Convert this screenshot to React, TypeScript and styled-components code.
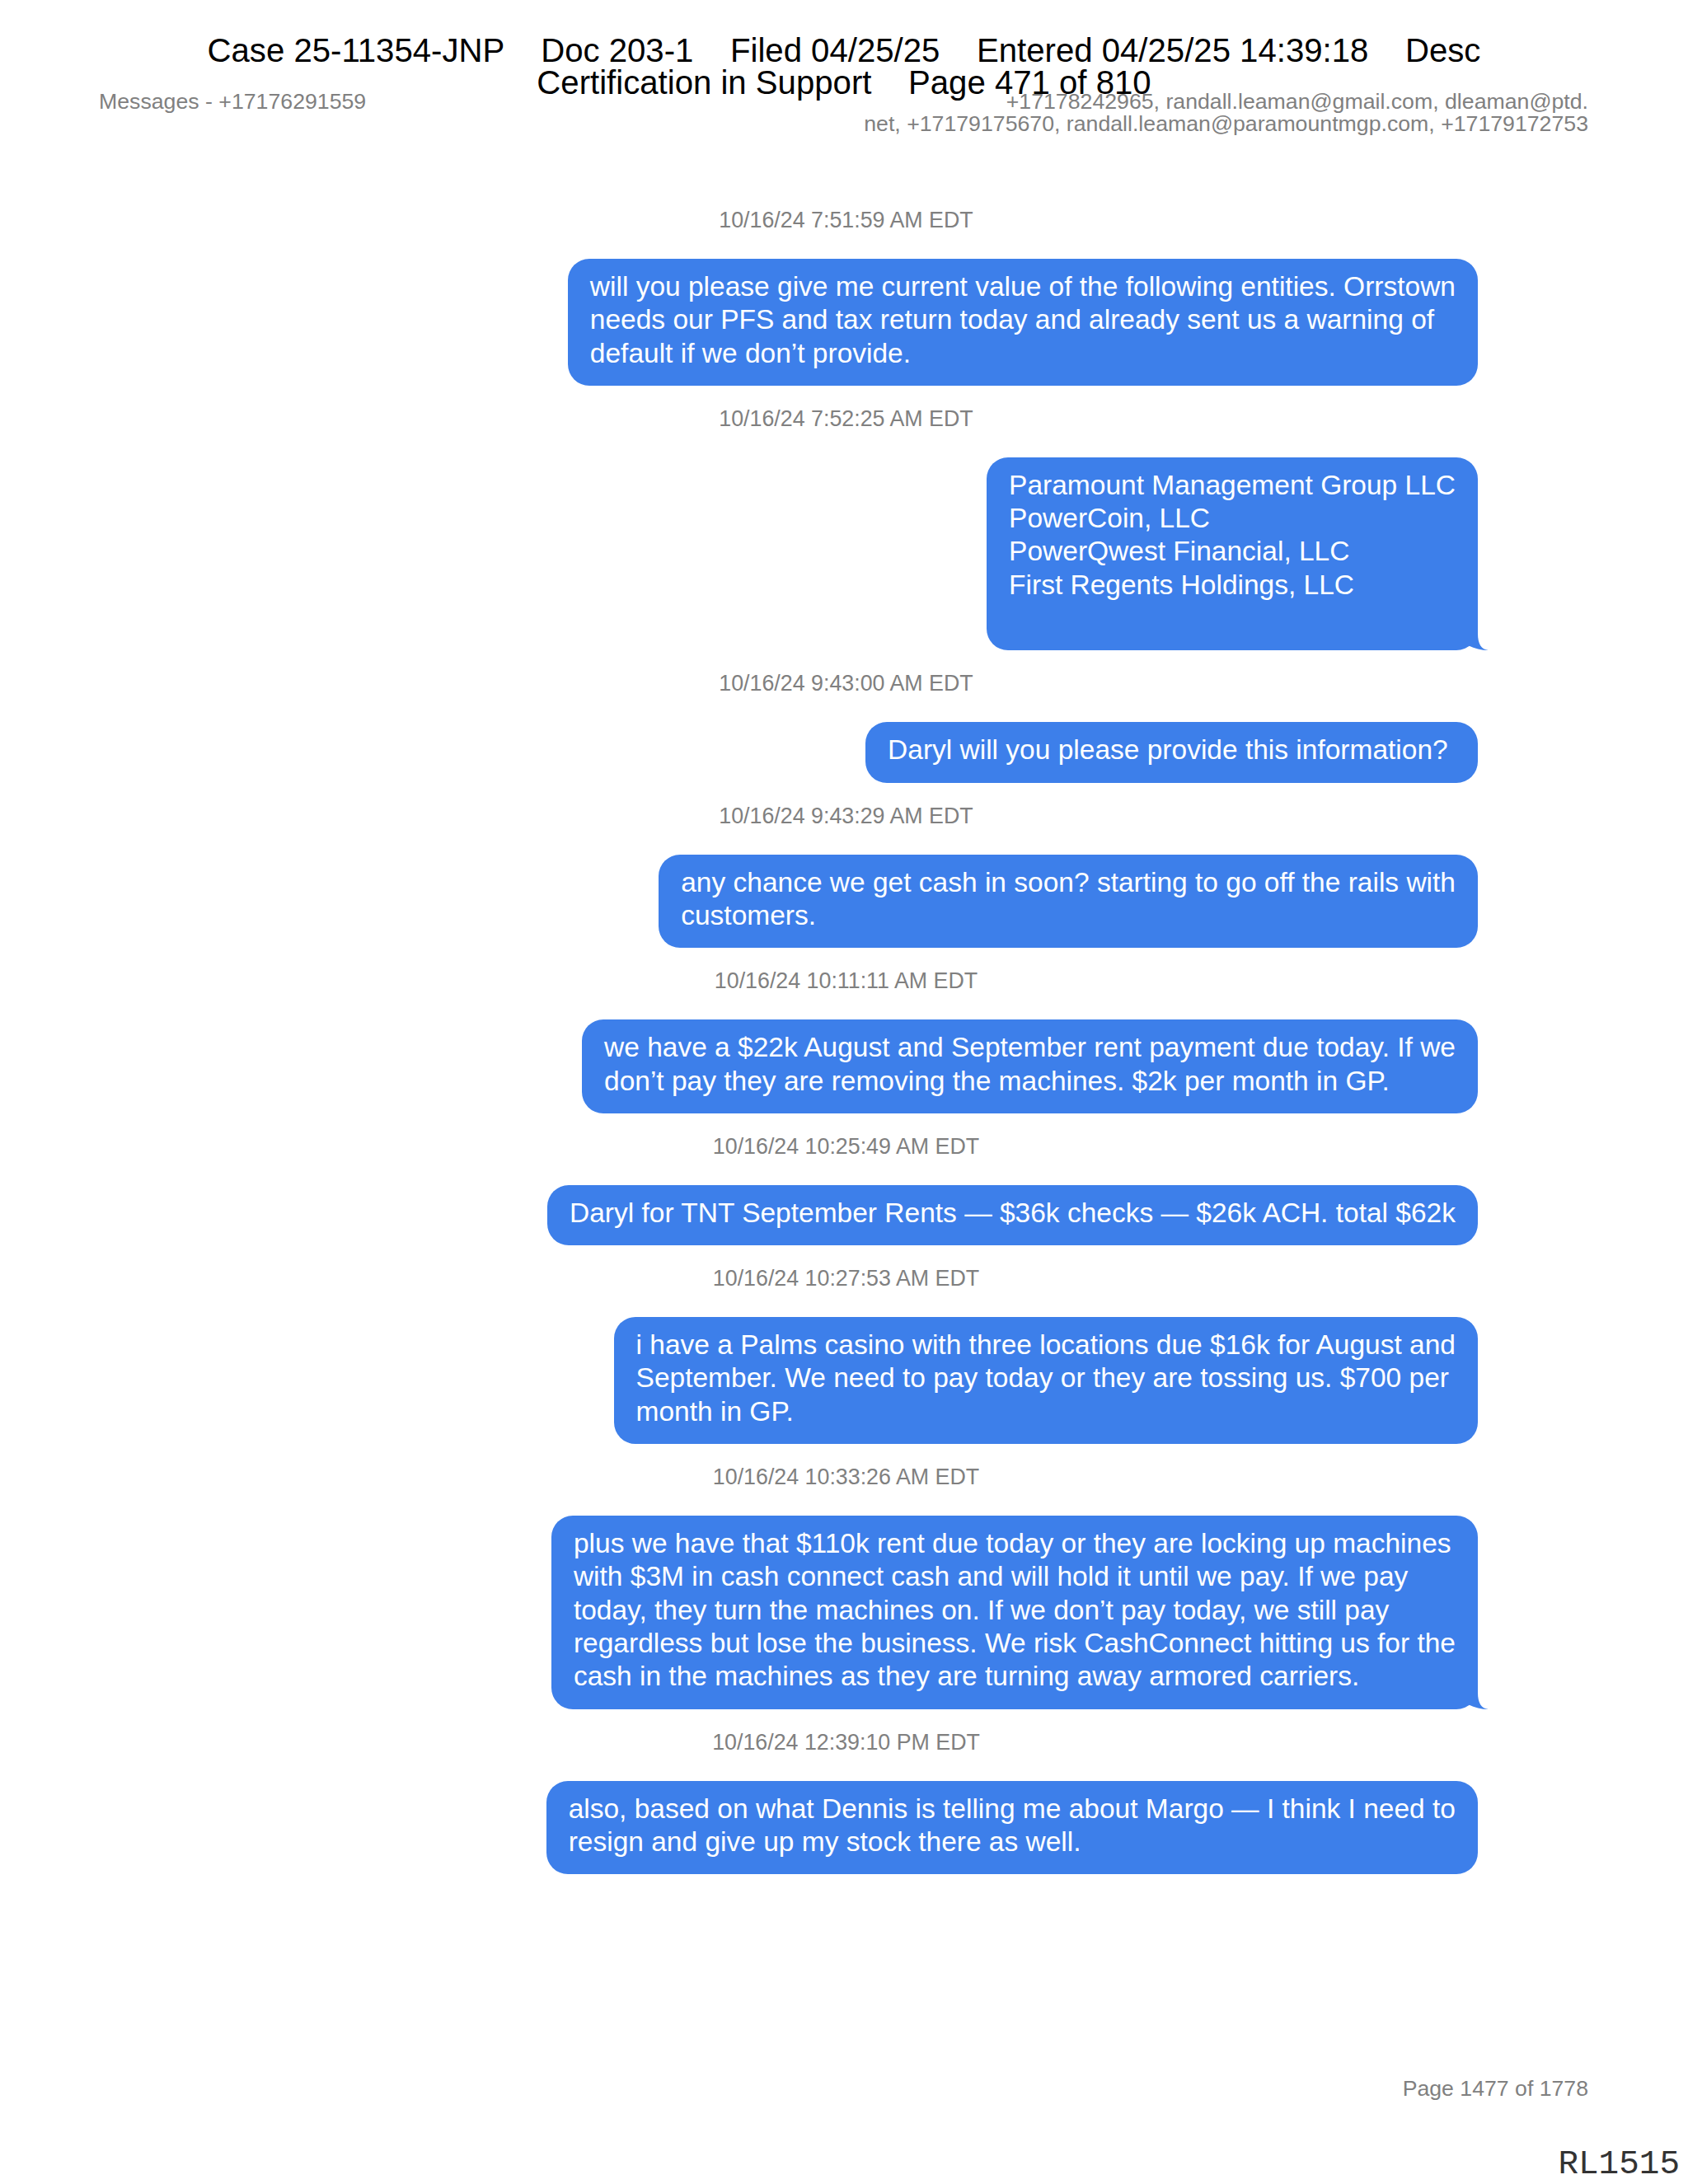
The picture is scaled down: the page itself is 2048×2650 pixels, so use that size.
import styled, { createGlobalStyle } from 'styled-components';

type Message = {
  time: string;
  text: string;
  tail?: boolean;
};

const messages: Message[] = [
  {
    time: '10/16/24 7:51:59 AM EDT',
    text: 'will you please give me current value of the following entities. Orrstown\nneeds our PFS and tax return today and already sent us a warning of\ndefault if we don’t provide.',
  },
  {
    time: '10/16/24 7:52:25 AM EDT',
    text: 'Paramount Management Group LLC\nPowerCoin, LLC\nPowerQwest Financial, LLC\nFirst Regents Holdings, LLC\n ',
    tail: true,
  },
  {
    time: '10/16/24 9:43:00 AM EDT',
    text: 'Daryl will you please provide this information? ',
  },
  {
    time: '10/16/24 9:43:29 AM EDT',
    text: 'any chance we get cash in soon? starting to go off the rails with\ncustomers.',
  },
  {
    time: '10/16/24 10:11:11 AM EDT',
    text: 'we have a $22k August and September rent payment due today. If we\ndon’t pay they are removing the machines. $2k per month in GP.',
  },
  {
    time: '10/16/24 10:25:49 AM EDT',
    text: 'Daryl for TNT September Rents — $36k checks — $26k ACH. total $62k',
  },
  {
    time: '10/16/24 10:27:53 AM EDT',
    text: 'i have a Palms casino with three locations due $16k for August and\nSeptember. We need to pay today or they are tossing us. $700 per\nmonth in GP.',
  },
  {
    time: '10/16/24 10:33:26 AM EDT',
    text: 'plus we have that $110k rent due today or they are locking up machines\nwith $3M in cash connect cash and will hold it until we pay. If we pay\ntoday, they turn the machines on. If we don’t pay today, we still pay\nregardless but lose the business. We risk CashConnect hitting us for the\ncash in the machines as they are turning away armored carriers.',
    tail: true,
  },
  {
    time: '10/16/24 12:39:10 PM EDT',
    text: 'also, based on what Dennis is telling me about Margo — I think I need to\nresign and give up my stock there as well.',
  },
];

const BubbleTail = () => (
  <TailSvg width="42" height="32" viewBox="0 0 42 32">
    <path d="M29 0 L29 12 C29 24 33 31 42 32 C33 32 25 30 18 26.5 L18 0 Z" fill="#3d7fea" />
  </TailSvg>
);

const App = () => {
  return (
    <>
      <GlobalStyle />
      <Page>
        <FilingStamp>
          {'Case 25-11354-JNP    Doc 203-1    Filed 04/25/25    Entered 04/25/25 14:39:18    Desc'}
          <br />
          {'Certification in Support    Page 471 of 810'}
        </FilingStamp>

        <MetaRow>
          <MetaLeft>Messages - +17176291559</MetaLeft>
          <MetaRight>
            +17178242965, randall.leaman@gmail.com, dleaman@ptd.
            <br />
            net, +17179175670, randall.leaman@paramountmgp.com, +17179172753
          </MetaRight>
        </MetaRow>

        <Thread>
          {messages.map((m) => (
            <MessageBlock key={m.time}>
              <Timestamp>{m.time}</Timestamp>
              <BubbleRow>
                <Bubble $tail={m.tail}>
                  {m.text}
                  {m.tail && <BubbleTail />}
                </Bubble>
              </BubbleRow>
            </MessageBlock>
          ))}
        </Thread>

        <Footer>
          <PageNumber>Page 1477 of 1778</PageNumber>
          <BatesMark>RL1515</BatesMark>
        </Footer>
      </Page>
    </>
  );
};

export default App;

const GlobalStyle = createGlobalStyle`
  html, body {
    margin: 0;
    padding: 0;
    background: #ffffff;
  }
  body {
    font-family: "Liberation Sans", Arial, sans-serif;
  }
`;

const Page = styled.div`
  position: relative;
  width: 2048px;
  height: 2650px;
  box-sizing: border-box;
  padding: 110px 0 0;
  display: flex;
  flex-direction: column;
  background: #ffffff;
  overflow: hidden;
`;

const FilingStamp = styled.div`
  position: absolute;
  top: 42px;
  left: 0;
  right: 0;
  text-align: center;
  font-size: 40.15px;
  line-height: 39px;
  color: #000000;
  white-space: pre;
  z-index: 2;
`;

const MetaRow = styled.div`
  display: flex;
  justify-content: space-between;
  align-items: flex-start;
  padding: 0 121px 0 120px;
  font-size: 26.7px;
  line-height: 27px;
  color: #808080;
`;

const MetaLeft = styled.div``;

const MetaRight = styled.div`
  text-align: right;
`;

const Thread = styled.div`
  display: flex;
  flex-direction: column;
  margin-top: 63px;
`;

const MessageBlock = styled.div`
  display: flex;
  flex-direction: column;
`;

const Timestamp = styled.div`
  margin: 24px 0 31px;
  padding-left: 5px;
  text-align: center;
  font-size: 26.8px;
  line-height: 32px;
  color: #808080;
`;

const BubbleRow = styled.div`
  display: flex;
  justify-content: flex-end;
  padding-right: 255px;
`;

const Bubble = styled.div<{ $tail?: boolean }>`
  position: relative;
  background: #3d7fea;
  color: #ffffff;
  font-size: 33.5px;
  line-height: 40.3px;
  padding: 14px 27px 19px;
  border-radius: 26px;
  white-space: pre;
`;

const TailSvg = styled.svg`
  position: absolute;
  right: -13px;
  bottom: 0;
  display: block;
`;

const Footer = styled.div`
  margin-top: auto;
  display: flex;
  flex-direction: column;
  align-items: flex-end;
`;

const PageNumber = styled.div`
  padding-right: 121px;
  font-size: 26.67px;
  line-height: 32px;
  color: #808080;
`;

const BatesMark = styled.div`
  margin-top: 52px;
  padding-right: 10px;
  font-family: "Liberation Mono", "Courier New", monospace;
  font-size: 41px;
  line-height: 48px;
  color: #333333;
`;
